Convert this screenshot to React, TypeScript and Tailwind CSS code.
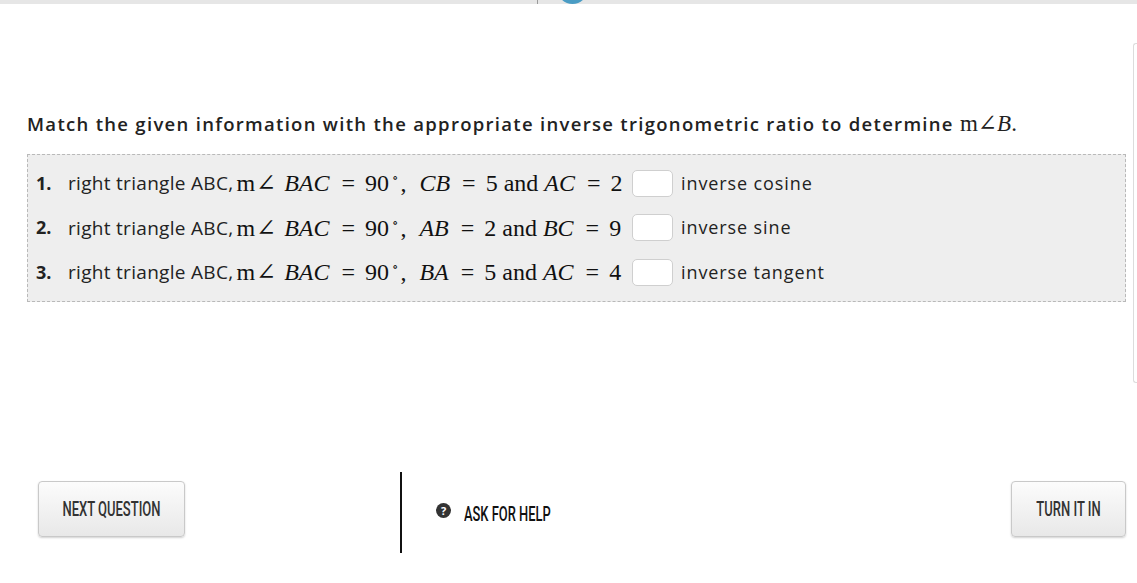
import React from "react";

const sans = { fontFamily: "'Open Sans', 'Liberation Sans', sans-serif" };
const serif = { fontFamily: "'Liberation Serif', 'DejaVu Serif', serif" };
const cond = { fontFamily: "Roboto, 'Liberation Sans', sans-serif" };

function Eq() {
  return <span className="ml-[12px] mr-[10px]">=</span>;
}

type Row = { n: string; a: string; av: string; b: string; bv: string; label: string };

const rows: Row[] = [
  { n: "1.", a: "CB", av: "5", b: "AC", bv: "2", label: "inverse cosine" },
  { n: "2.", a: "AB", av: "2", b: "BC", bv: "9", label: "inverse sine" },
  { n: "3.", a: "BA", av: "5", b: "AC", bv: "4", label: "inverse tangent" },
];

function MatchRow({ r }: { r: Row }) {
  return (
    <div className="flex items-center h-[44.5px]">
      <span className="w-[40px] pl-[8px] text-[18px] font-bold text-[#222]" style={sans}>
        {r.n}
      </span>
      <span className="w-[564px] flex items-center whitespace-nowrap">
        <span className="text-[19px] tracking-[0.3px] text-[#222]" style={sans}>
          right triangle ABC,
        </span>
        <span className="text-[24px] text-[#111] leading-none" style={serif}>
          <span className="ml-[3px]">m</span>
          <span className="ml-[1px]">∠</span>
          <i className="ml-[8px]">BAC</i>
          <Eq />
          90
          <span className="relative -top-[9px] text-[13px] ml-[3px]">∘</span>
          <span className="ml-[2px]">,</span>
          <i className="ml-[13px]">{r.a}</i>
          <Eq />
          {r.av} and <i>{r.b}</i>
          <Eq />
          {r.bv}
        </span>
      </span>
      <span className="w-[41px] h-[27px] bg-white border border-[#cfcfcf] rounded-[5px] shrink-0" />
      <span className="ml-[8px] text-[18px] tracking-[0.9px] text-[#222]" style={sans}>
        {r.label}
      </span>
    </div>
  );
}

function Btn({ w, children }: { w: string; children: React.ReactNode }) {
  return (
    <button
      className={`${w} h-[56px] shrink-0 rounded-[4px] border border-[#c9c9c9] bg-gradient-to-b from-[#fcfcfc] to-[#e8e8e8] shadow-[0_1px_2px_rgba(0,0,0,0.18)] flex items-center justify-center overflow-hidden`}
    >
      <span className="inline-block scale-x-[0.65] text-[20px] font-medium text-[#333] whitespace-nowrap leading-none" style={cond}>
        {children}
      </span>
    </button>
  );
}

export default function App() {
  return (
    <div className="relative w-[1137px] h-[583px] bg-white overflow-hidden">
      {/* top strip */}
      <div className="relative h-[4px] w-full bg-[#e6e6e6]">
        <div className="absolute left-[537px] top-0 w-px h-[4px] bg-[#9a9a9a]" />
        <div className="absolute left-[557px] -top-[12px] w-[31px] h-[16px] rounded-b-full bg-[#4a9cc4]" />
      </div>
      {/* right edge line */}
      <div className="absolute left-[1133px] top-[43px] w-[4px] h-[340px] border-l border-t border-b border-[#dcdcdc] rounded-l-[3px]" />

      <div className="pl-[27px] pr-[11px] pt-[107px]">
        <h1 className="text-[18.5px] leading-[26px] font-semibold text-[#222] tracking-[1.3px] whitespace-nowrap" style={sans}>
          Match the given information with the appropriate inverse trigonometric ratio to determine{" "}
          <span className="font-normal tracking-normal text-[23px]" style={serif}>
            m∠<i>B</i>.
          </span>
        </h1>

        <div className="mt-[17px] border border-dashed border-[#b9b9b9] bg-[#eeeeee] pt-[6px] pb-[6px]">
          {rows.map((r) => (
            <MatchRow key={r.n} r={r} />
          ))}
        </div>
      </div>

      {/* bottom bar */}
      <div className="absolute left-0 right-0 top-[472px] flex items-start pl-[38px] pr-[11px] h-[81px]">
        <div className="mt-[9px]">
          <Btn w="w-[147px]">NEXT QUESTION</Btn>
        </div>
        <div className="ml-[215px] w-[2px] h-[81px] bg-[#111] shrink-0" />
        <div className="ml-[34px] mt-[32px] flex items-start">
          <span
            className="-mt-[1px] w-[15px] h-[15px] rounded-full bg-[#333] text-white text-[11px] font-bold flex items-center justify-center leading-none"
            style={sans}
          >
            ?
          </span>
          <span className="ml-[13px] h-[20px] flex items-center">
            <span className="inline-block origin-left scale-x-[0.645] text-[20px] font-medium text-[#111] whitespace-nowrap leading-none" style={cond}>
              ASK FOR HELP
            </span>
          </span>
        </div>
        <div className="flex-1" />
        <div className="mt-[9px]">
          <Btn w="w-[115px]">TURN IT IN</Btn>
        </div>
      </div>
    </div>
  );
}
